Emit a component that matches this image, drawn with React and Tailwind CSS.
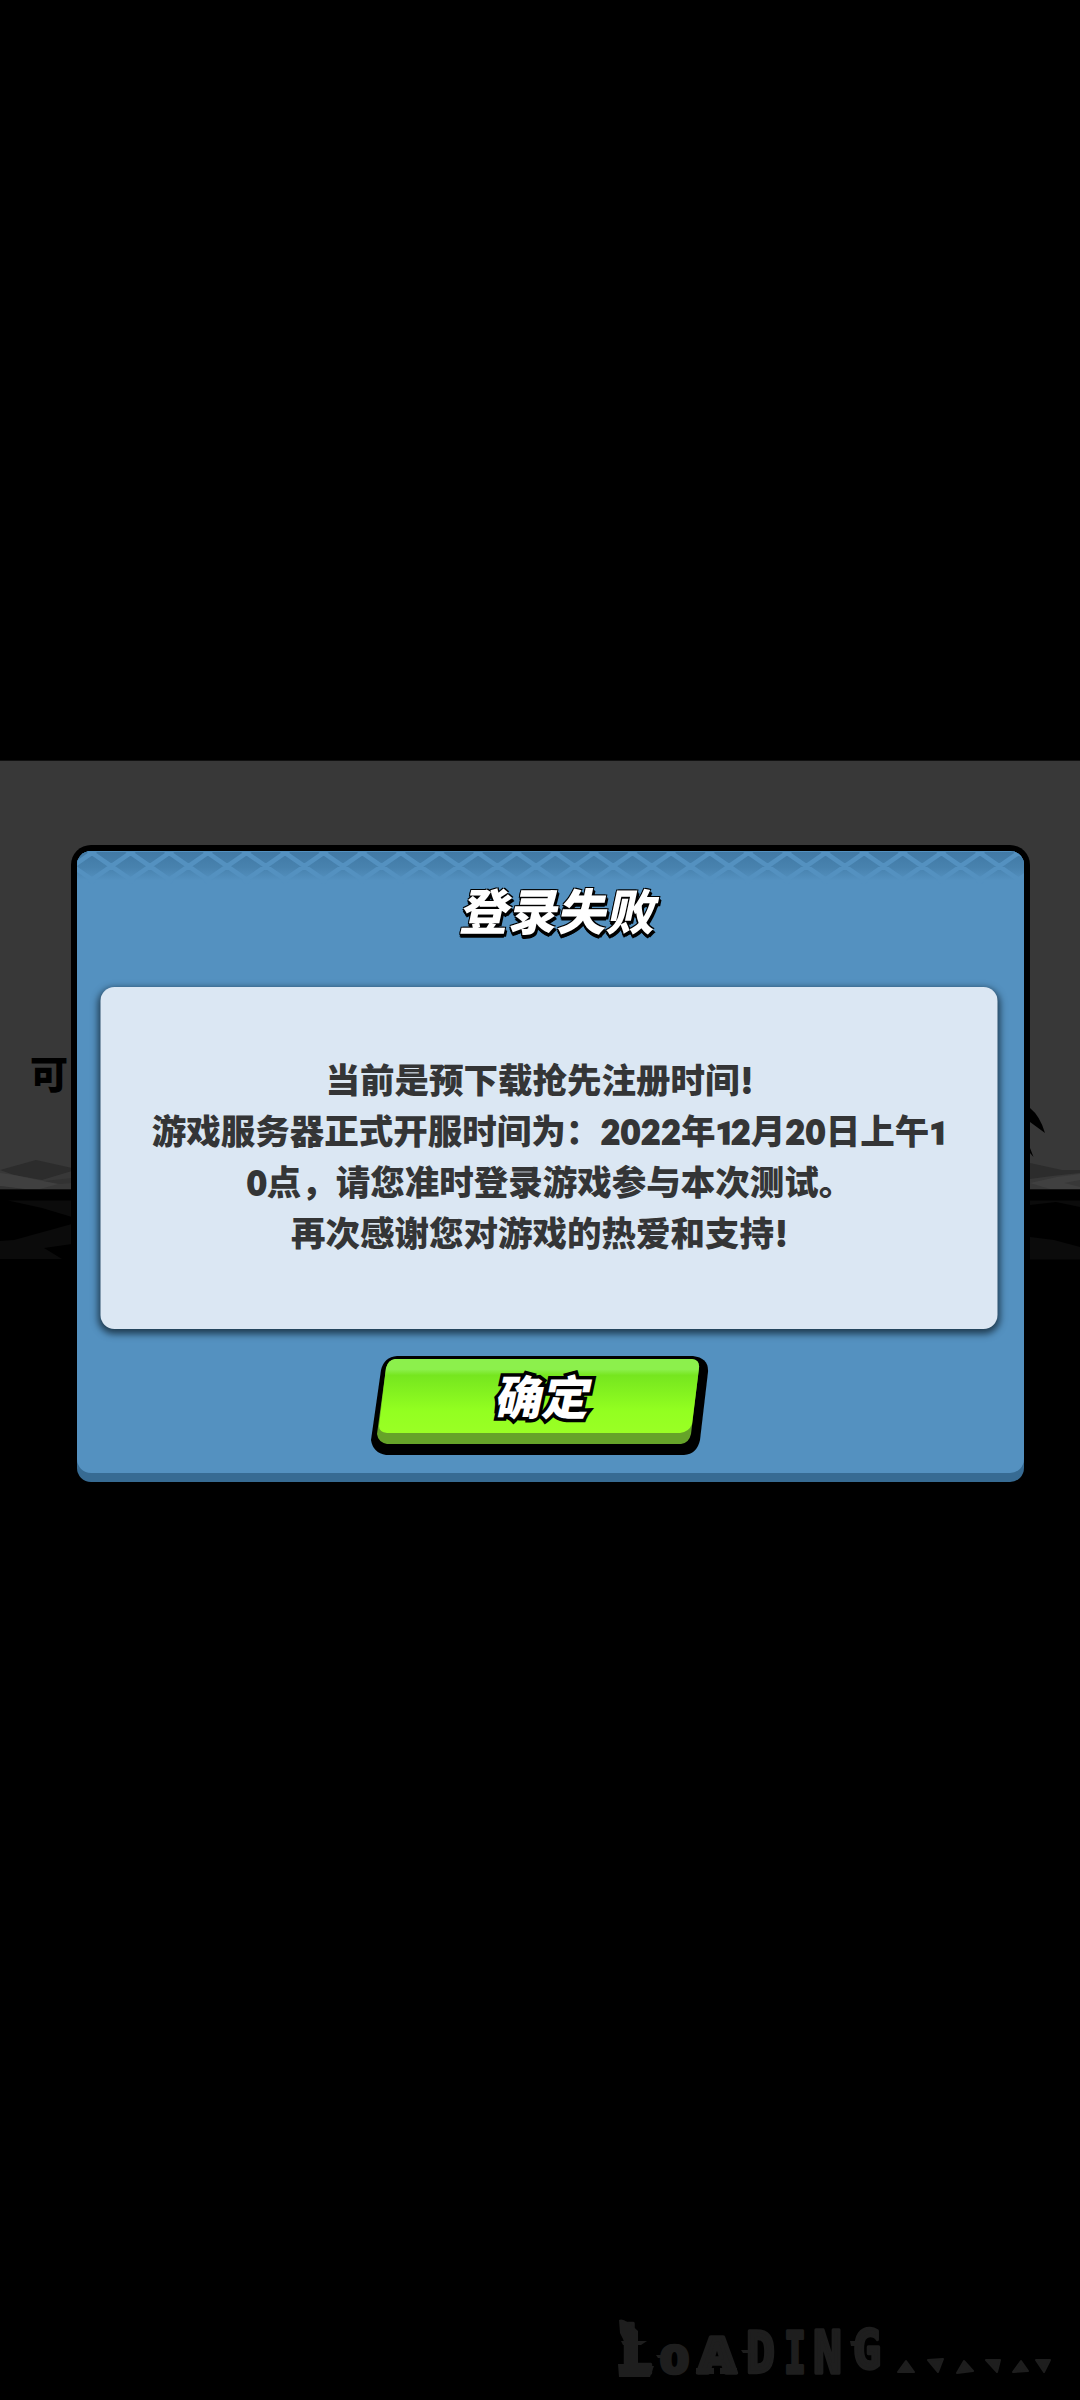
const cjk = "font-['Noto_Sans_CJK_SC',sans-serif]";

function Backdrop() {
  return (
    <svg className="col-start-1 row-start-1 block h-[500px] w-[1080px]" viewBox="0 760 1080 500">
      <rect x="0" y="760.7" width="1080" height="428.6" fill="#383838" />
      <g fill="#2c2c2c">
        <path d="M0 1170 L36 1160 L72 1168 V1171 L42 1180 L14 1175Z" />
        <path d="M1030 1163 L1062 1170 H1080 V1173 L1052 1176 L1030 1179Z" />
      </g>
      <g fill="#404040">
        <path d="M0 1173 L14 1175 L58 1184 L40 1189 H22 L0 1186Z" />
        <path d="M1030 1183 L1057 1177 L1080 1174 V1180 L1064 1183 L1080 1187 V1189 H1050Z" />
      </g>
      <path d="M44 1181 L72 1178 V1183 L60 1184Z M0 1186 L25 1189 H0Z" fill="#323232" />
      <path d="M1030 1108 Q1040 1116 1045 1133 L1030 1122Z M1030 1148 L1033.5 1157 L1030 1153Z" fill="#000" />
      <g fill="#0b0b0b">
        <path d="M8 1200.5 H72 V1217 L42 1208Z" />
        <path d="M72 1224 V1244 L44 1248 L62 1259 H0 V1241 L14 1240Z" />
        <path d="M1030 1200.5 H1080 V1207 L1056 1202 L1030 1205Z" />
        <path d="M1030 1237 L1054 1240 L1080 1247 V1259.5 H1030Z" />
      </g>
    </svg>
  );
}

function Lattice() {
  return (
    <svg className="block h-[34px] w-full" viewBox="0 0 948 34">
      <defs>
        <linearGradient id="fade" x1="0" y1="0" x2="0" y2="1">
          <stop offset="0" stopColor="#4179a5" />
          <stop offset="0.5" stopColor="#4882ae" />
          <stop offset="0.92" stopColor="#5491c0" />
        </linearGradient>
      </defs>
      <rect y="1" width="948" height="31" fill="url(#fade)" />
      <path
        d={Array.from({ length: 27 }, (_, i) => {
          const x = 15 + (i - 1) * 38.65;
          return `M${x - 4} -1 L${x + 42} 31 M${x + 4} -1 L${x - 42} 31`;
        }).join(" ")}
        stroke="#5491c0"
        strokeWidth="4.6"
        fill="none"
      />
    </svg>
  );
}

function Num({ children }) {
  return (
    <>
      {children.split("").map((c, i) =>
        c === "1" ? (
          <span key={i} className="inline-block w-[15px] text-center font-['Roboto',sans-serif] text-[32px] leading-none tracking-[-4px] [-webkit-text-stroke:1.4px_#343536]">
            1
          </span>
        ) : (
          <span key={i} className="inline-block w-[20.2px] text-center font-['Lato',sans-serif] text-[32px] leading-none [-webkit-text-stroke:2px_#343536]">
            {c}
          </span>
        )
      )}
    </>
  );
}

function Bang() {
  return (
    <span className="inline-block w-[15px] text-center font-['Lato',sans-serif] leading-none [-webkit-text-stroke:2px_#343536]">!</span>
  );
}

function Loading() {
  const letters = [
    ["L", 619, 2373, 34, 68],
    ["O", 660, 2373, 29, 38],
    ["A", 697, 2373, 40, 50],
    ["D", 746, 2373, 29, 57],
    ["I", 784, 2373, 22, 57],
    ["N", 813, 2373, 29, 59],
    ["G", 853, 2368, 28, 54],
  ];
  return (
    <svg className="ml-[600px] block h-[90px] w-[480px]" viewBox="600 2310 480 90">
      <g fill="#1e1e1e" stroke="#1e1e1e" strokeWidth="3.5" strokeLinejoin="round" fontWeight="700" className="font-['DejaVu_Sans_Mono',monospace]">
        {letters.map(([c, x, y, w, s], i) => (
          <text key={i} x={x} y={y} fontSize={s} textLength={w} lengthAdjust="spacingAndGlyphs">
            {c}
          </text>
        ))}
      </g>
      <path
        d="M619 2320 Q624 2317 638 2331 V2366 H654 L650 2377 L619 2377 L618 2364 H626 V2345 L620 2333Z M621 2341 h26 l-6 4 h-18Z M656 2355 h10 v3 h-8Z M741 2350 h14 v3 h-12Z M850 2341 h8 v5 h-7Z M696 2368 h18 v6 h-18Z M720 2368 h17 v6 h-17Z"
        fill="#1e1e1e"
      />
      <path
        d="M906 2361 L914 2372 H898Z M928 2360 L943 2359 L938 2372Z M964 2361 L973 2371 L957 2373Z M986 2360 L1000 2360 L997 2372Z M1021 2361 L1028 2371 L1013 2372Z M1036 2360 L1050 2360 L1044 2372Z"
        fill="#1e1e1e"
        stroke="#1e1e1e"
        strokeWidth="2"
        strokeLinejoin="round"
      />
    </svg>
  );
}

export default function App() {
  return (
    <div className={`flex h-[2400px] w-[1080px] flex-col justify-between overflow-hidden bg-black pt-[760px] ${cjk}`}>
      <div className="grid">
        <Backdrop />
        <div className="col-start-1 row-start-1 pl-[30px] pt-[284px] text-[38px] font-black leading-[56px] text-black">可</div>
        <div className="z-10 col-start-1 row-start-1 ml-[71px] mt-[85px] h-[643px] w-[959px] rounded-[20px] bg-black p-[6px]">
          <div className="flex h-[631px] w-[947px] flex-col items-center overflow-hidden rounded-[14px] bg-[#376b93]">
            <div className="flex h-[622px] w-full shrink-0 flex-col items-center rounded-b-[14px] bg-[#5491c0]">
              <Lattice />
              <h1 className="ml-[11px] mt-[-9px] h-[110px] -skew-x-12 whitespace-nowrap text-[49px] font-black leading-[66px] text-white [text-shadow:-1px_-1px_0_#000,1px_-1px_0_#000,-1px_1px_0_#000,2px_2px_0_#000,3px_3px_0_#000,1px_4px_0_#000,0px_3px_0_#000]">
                登录失败
              </h1>
              <div className="flex h-[342px] w-[897px] -translate-x-[1.5px] translate-y-[1px] flex-col items-center rounded-[14px] bg-[#dbe7f3] pt-[66px] text-[34.5px] font-black leading-[51px] text-[#343536] shadow-[0_3px_7px_2px_#203d52]">
                <p className="h-[51px] -translate-x-[9px] whitespace-nowrap">
                  当前是预下载抢先注册时间<Bang />
                </p>
                <p className="h-[51px] -translate-x-[1px] whitespace-nowrap">
                  游戏服务器正式开服时间为：<Num>2022</Num>年<Num>12</Num>月<Num>20</Num>日上午<Num>1</Num>
                </p>
                <p className="h-[51px] translate-x-[1px] whitespace-nowrap">
                  <Num>0</Num>点，请您准时登录游戏参与本次测试。
                </p>
                <p className="h-[51px] -translate-x-[9px] whitespace-nowrap">
                  再次感谢您对游戏的热爱和支持<Bang />
                </p>
              </div>
              <button className="mr-[21px] mt-[28px] grid h-[99px] w-[338px] shrink-0">
                <svg className="col-start-1 row-start-1 block" width="338" height="99" viewBox="0 0 338 99">
                  <defs>
                    <linearGradient id="green" x1="0" y1="0" x2="0" y2="1">
                      <stop offset="0" stopColor="#8cf04c" />
                      <stop offset="0.14" stopColor="#8cf04c" />
                      <stop offset="0.22" stopColor="#76e61f" />
                      <stop offset="0.7" stopColor="#93ff20" />
                      <stop offset="1" stopColor="#9aff25" />
                    </linearGradient>
                  </defs>
                  <path d="M26 0 H322 Q338 2 337 16 L329 84 Q326 98 313 99 H15 Q2 97 0 84 L10 14 Q13 1 26 0Z" fill="#000" />
                  <path d="M24 3 H321 Q329 4 328 12 L320 78 Q318 87 310 88 H16 Q7 86 6 78 L15 12 Q17 4 24 3Z" fill="#66a329" />
                  <path d="M24 3 H321 Q329 4 328 12 L321 68 Q318 76 309 77 H16 Q8 76 8 70 L15 12 Q17 4 24 3Z" fill="url(#green)" />
                </svg>
                <span className="col-start-1 row-start-1 ml-[4px] mt-[5px] -skew-x-12 text-center text-[47px] font-black leading-[68px] text-white [-webkit-text-stroke:7px_#000] [paint-order:stroke_fill]">
                  确定
                </span>
              </button>
            </div>
          </div>
        </div>
      </div>
      <Loading />
    </div>
  );
}
